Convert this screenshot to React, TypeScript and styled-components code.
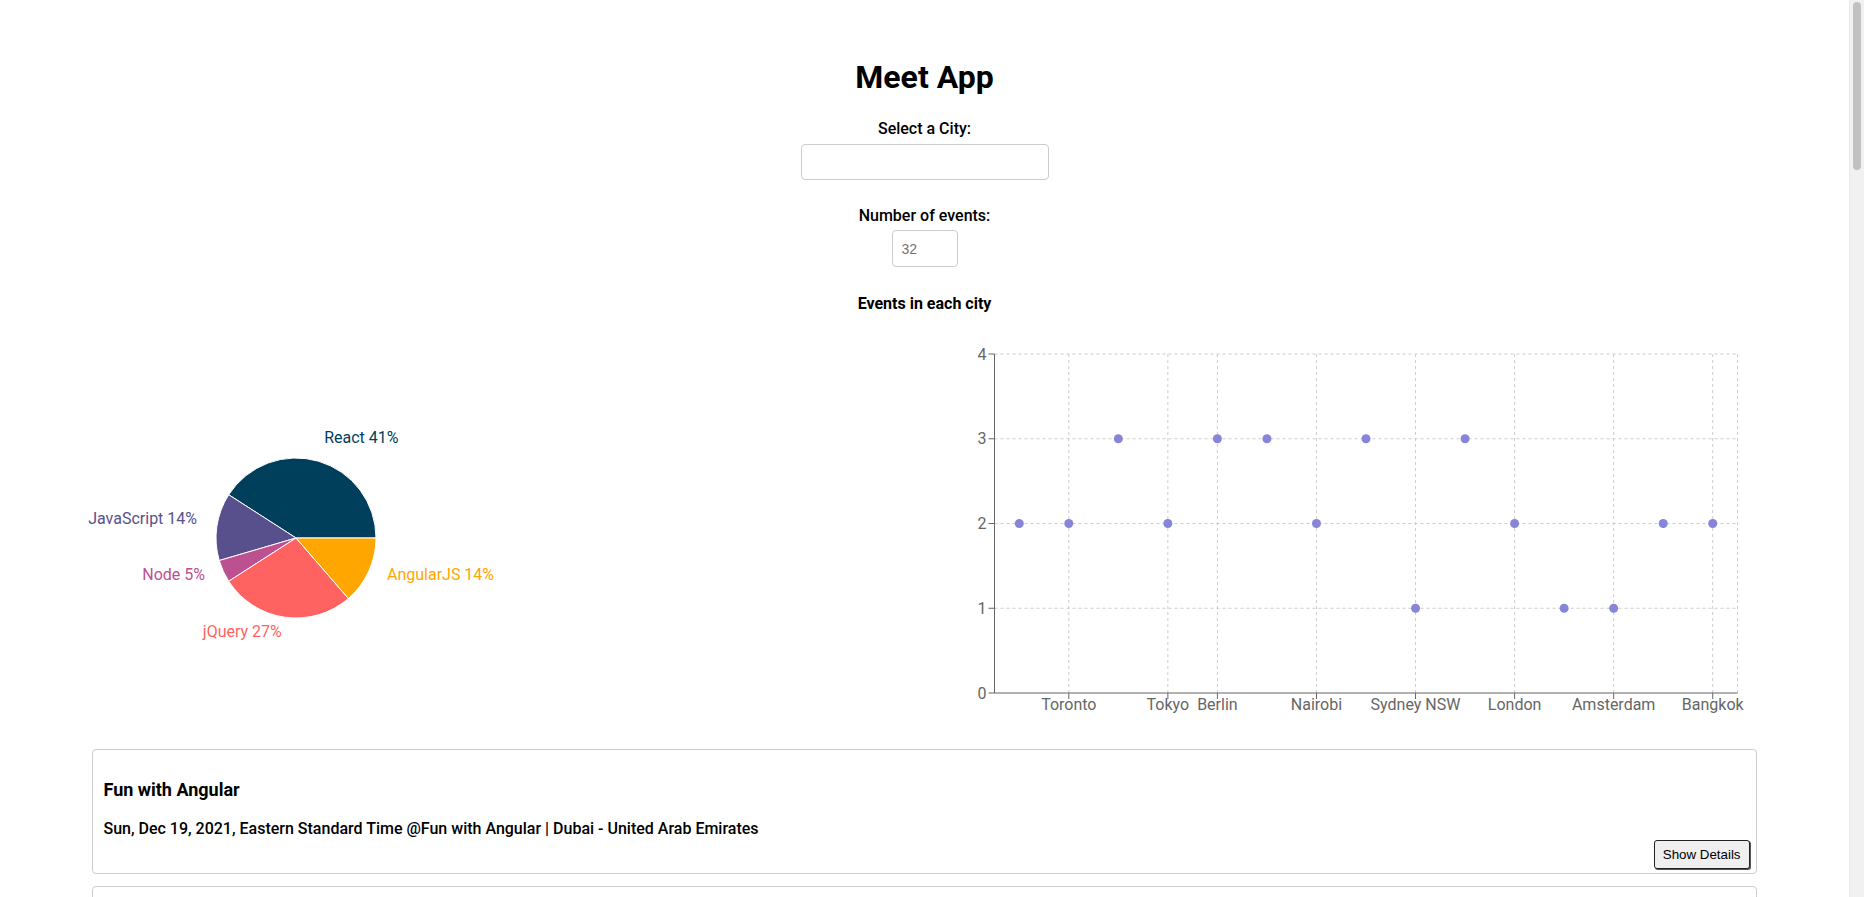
import React from "react";
import styled, { createGlobalStyle } from "styled-components";

const GlobalStyle = createGlobalStyle`
  html, body {
    margin: 0;
    padding: 0;
    background: #fff;
  }
  body {
    font-family: Roboto, "Liberation Sans", Arial, sans-serif;
    color: #000;
  }
`;

const AppWrap = styled.div`
  text-align: center;
  padding: 58px 0 40px;
  margin-right: 15px;
`;

const ScrollTrack = styled.div`
  position: fixed;
  top: 0;
  right: 0;
  width: 15px;
  height: 100vh;
  background: #f1f1f1;
  border-left: 1px solid #e8e8e8;
  box-sizing: border-box;
`;

const ScrollThumb = styled.div`
  margin: 2px 3px 0 3px;
  height: 168px;
  border-radius: 4px;
  background: #c1c1c1;
`;

const Title = styled.h1`
  margin: 0;
  font-size: 32px;
  font-weight: 700;
  line-height: normal;
`;

const Field = styled.div<{ $gap: number }>`
  display: flex;
  flex-direction: column;
  align-items: center;
  margin-top: ${(p) => p.$gap}px;
`;

const Label = styled.label<{ $gap: number }>`
  font-size: 16px;
  font-weight: 500;
  line-height: normal;
  margin-bottom: ${(p) => p.$gap}px;
`;

const TextInput = styled.input<{ $w: number; $h: number }>`
  box-sizing: border-box;
  width: ${(p) => p.$w}px;
  height: ${(p) => p.$h}px;
  border: 1px solid #ccc;
  border-radius: 4px;
  padding: 0 9px;
  font-family: "Liberation Sans", Arial, sans-serif;
  font-size: 14px;
  background: #fff;
  outline: none;
  &::placeholder {
    color: #757575;
  }
`;

const ChartTitle = styled.h4`
  margin: 27px 0 0;
  font-size: 16px;
  font-weight: 700;
  line-height: normal;
`;

const ChartsRow = styled.div`
  display: grid;
  grid-template-columns: 1fr 1fr;
  margin-top: 25px;
  height: 400px;
`;

const ChartCell = styled.div`
  display: flex;
  justify-content: flex-start;
  overflow: hidden;
`;

const EventList = styled.ul`
  list-style: none;
  margin: 11px 0 0;
  padding: 0;
`;

const EventCard = styled.li`
  box-sizing: border-box;
  width: 90%;
  margin: 0 auto 12px;
  border: 1px solid #ccc;
  border-radius: 4px;
  padding: 0 6px 4px 10px;
  text-align: left;
`;

const EventTitle = styled.h2`
  margin: 29px 0 0;
  font-size: 18px;
  font-weight: 700;
  line-height: normal;
`;

const EventInfo = styled.p`
  margin: 19px 0 0;
  font-size: 16px;
  font-weight: 500;
  line-height: normal;
`;

const ButtonRow = styled.div`
  display: flex;
  justify-content: flex-end;
  margin-top: 2px;
`;

const DetailsButton = styled.button`
  font-family: "Liberation Sans", Arial, sans-serif;
  font-size: 13.33px;
  line-height: 15px;
  padding: 6px 8px;
  color: #000;
  background: #efefef;
  border: 1px solid #222;
  border-radius: 3px;
  box-shadow: 1px 1px 0 #555;
  cursor: pointer;
`;

// ---- pie chart ----
const genres = [
  { name: "React", value: 9, color: "#003f5c" },
  { name: "JavaScript", value: 3, color: "#58508d" },
  { name: "Node", value: 1, color: "#bc5090" },
  { name: "jQuery", value: 6, color: "#ff6361" },
  { name: "AngularJS", value: 3, color: "#ffa600" },
];

const PIE_CX = 296;
const PIE_CY = 200;
const PIE_R = 80;

const polar = (r: number, deg: number) => [
  PIE_CX + r * Math.cos((deg * Math.PI) / 180),
  PIE_CY - r * Math.sin((deg * Math.PI) / 180),
];

const GenrePie: React.FC = () => {
  const total = genres.reduce((s, g) => s + g.value, 0);
  let start = 0;
  return (
    <svg width={600} height={400}>
      {genres.map((g) => {
        const sweep = (g.value / total) * 360;
        const a1 = start;
        const a2 = start + sweep;
        start = a2;
        const [x1, y1] = polar(PIE_R, a1);
        const [x2, y2] = polar(PIE_R, a2);
        const mid = (a1 + a2) / 2;
        const [lx, ly] = polar(PIE_R + 20, mid);
        const d = `M${PIE_CX},${PIE_CY} L${x1},${y1} A${PIE_R},${PIE_R} 0 ${sweep > 180 ? 1 : 0} 0 ${x2},${y2} Z`;
        return (
          <g key={g.name}>
            <path d={d} fill={g.color} stroke="#fff" strokeWidth={1} />
            <text
              x={lx}
              y={ly - 5}
              fill={g.color}
              fontSize={16}
              textAnchor={lx > PIE_CX ? "start" : "end"}
              dominantBaseline="central"
            >
              {`${g.name} ${((g.value / total) * 100).toFixed(0)}%`}
            </text>
          </g>
        );
      })}
    </svg>
  );
};

// ---- scatter chart ----
const counts = [2, 2, 3, 2, 3, 3, 2, 3, 1, 3, 2, 1, 1, 2, 2];
const ticks = [
  { i: 1, label: "Toronto" },
  { i: 3, label: "Tokyo" },
  { i: 4, label: "Berlin" },
  { i: 6, label: "Nairobi" },
  { i: 8, label: "Sydney NSW" },
  { i: 10, label: "London" },
  { i: 12, label: "Amsterdam" },
  { i: 14, label: "Bangkok" },
];

const LEFT = 69.5;
const RIGHT = 812.5;
const TOP = 16;
const BOTTOM = 355;
const band = (RIGHT - LEFT) / counts.length;
const xAt = (i: number) => LEFT + band * (i + 0.5);
const yAt = (v: number) => BOTTOM - ((BOTTOM - TOP) / 4) * v;

const CityScatter: React.FC = () => (
  <svg width={840} height={400}>
    <g stroke="#ccc" strokeDasharray="3 3" fill="none">
      {[1, 2, 3, 4].map((v) => (
        <line key={v} x1={LEFT} x2={RIGHT} y1={yAt(v)} y2={yAt(v)} />
      ))}
      {ticks.map((t) => (
        <line key={t.i} x1={xAt(t.i)} x2={xAt(t.i)} y1={TOP} y2={BOTTOM} />
      ))}
      <line x1={RIGHT} x2={RIGHT} y1={TOP} y2={BOTTOM} />
    </g>
    <g stroke="#666">
      <line x1={LEFT} x2={LEFT} y1={TOP} y2={BOTTOM} />
      <line x1={LEFT} x2={RIGHT} y1={BOTTOM} y2={BOTTOM} />
      {[0, 1, 2, 3, 4].map((v) => (
        <line key={v} x1={LEFT - 6} x2={LEFT} y1={yAt(v)} y2={yAt(v)} />
      ))}
      {ticks.map((t) => (
        <line key={t.i} x1={xAt(t.i)} x2={xAt(t.i)} y1={BOTTOM} y2={BOTTOM + 6} />
      ))}
    </g>
    <g fill="#666" fontSize={16}>
      {[0, 1, 2, 3, 4].map((v) => (
        <text key={v} x={LEFT - 8} y={yAt(v)} dy="0.355em" textAnchor="end">
          {v}
        </text>
      ))}
      {ticks.map((t) => (
        <text key={t.i} x={xAt(t.i)} y={BOTTOM + 6} dy="0.71em" textAnchor="middle">
          {t.label}
        </text>
      ))}
    </g>
    {counts.map((v, i) => (
      <circle key={i} cx={xAt(i)} cy={yAt(v)} r={4.5} fill="#8884d8" />
    ))}
  </svg>
);

const events = [
  {
    title: "Fun with Angular",
    info: "Sun, Dec 19, 2021, Eastern Standard Time @Fun with Angular | Dubai - United Arab Emirates",
  },
  {
    title: "Learn JavaScript",
    info: "Tue, Dec 21, 2021, Eastern Standard Time @Learn JavaScript | London, UK",
  },
  {
    title: "React is Fun",
    info: "Wed, Dec 22, 2021, Eastern Standard Time @React is Fun | Berlin, Germany",
  },
];

const App: React.FC = () => {
  return (
    <AppWrap>
      <GlobalStyle />
      <Title>Meet App</Title>
      <Field $gap={23}>
        <Label $gap={6}>Select a City:</Label>
        <TextInput type="text" $w={248} $h={36} />
      </Field>
      <Field $gap={26}>
        <Label $gap={5}>Number of events:</Label>
        <TextInput type="text" placeholder="32" $w={66} $h={37} />
      </Field>
      <ChartTitle>Events in each city</ChartTitle>
      <ChartsRow>
        <ChartCell>
          <GenrePie />
        </ChartCell>
        <ChartCell>
          <CityScatter />
        </ChartCell>
      </ChartsRow>
      <EventList>
        {events.map((e) => (
          <EventCard key={e.title}>
            <EventTitle>{e.title}</EventTitle>
            <EventInfo>{e.info}</EventInfo>
            <ButtonRow>
              <DetailsButton>Show Details</DetailsButton>
            </ButtonRow>
          </EventCard>
        ))}
      </EventList>
      <ScrollTrack>
        <ScrollThumb />
      </ScrollTrack>
    </AppWrap>
  );
};

export default App;
